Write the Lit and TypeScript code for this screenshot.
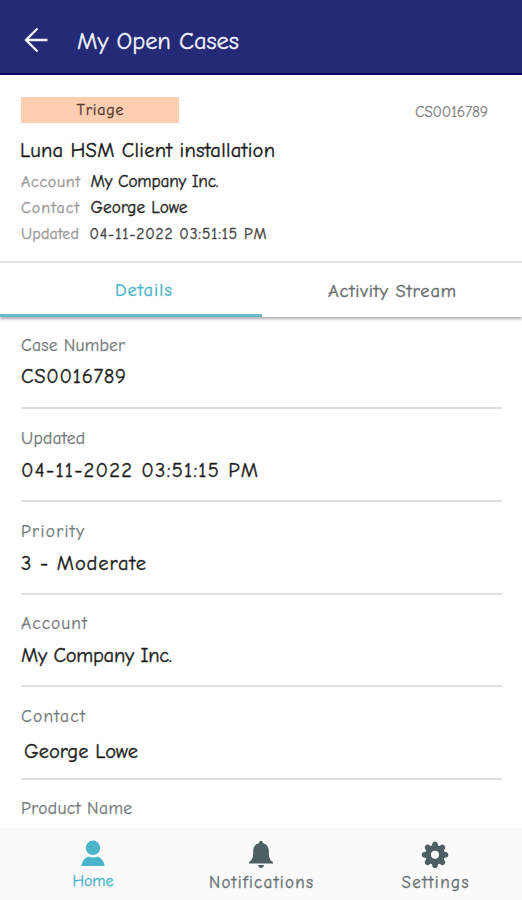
import { LitElement, html, css, svg } from "lit";
import { customElement, property } from "lit/decorators.js";
import { styleMap } from "lit/directives/style-map.js";

/* A single line of text whose tracking is adjusted to fill a given width. */
@customElement("fit-text")
class FitText extends LitElement {
  @property({ type: Number }) width = 0;
  @property() text = "";

  static styles = css`
    :host { display: block; white-space: nowrap; flex: none; }
    .run { display: inline-block; }
  `;

  updated() {
    const run = this.renderRoot.querySelector(".run") as HTMLElement;
    run.style.letterSpacing = "0px";
    const natural = run.getBoundingClientRect().width;
    run.style.letterSpacing = (this.width - natural) / (this.text.length - 1) + "px";
    this.style.width = this.width + "px";
  }

  render() {
    return html`<span class="run">${this.text}</span>`;
  }
}

interface Field {
  label: string;
  labelWidth: number;
  value?: string;
  valueWidth?: number;
  height: number;
  top: number;
  gap: number;
  indent?: number;
}

const FIELDS: Field[] = [
  { label: "Case Number", labelWidth: 104, value: "CS0016789", valueWidth: 105, height: 91, top: 15, gap: 8 },
  { label: "Updated", labelWidth: 64, value: "04-11-2022 03:51:15 PM", valueWidth: 237, height: 93, top: 17, gap: 9 },
  { label: "Priority", labelWidth: 63, value: "3 - Moderate", valueWidth: 125, height: 93, top: 17, gap: 9 },
  { label: "Account", labelWidth: 66, value: "My Company Inc.", valueWidth: 151, height: 92, top: 16, gap: 9 },
  { label: "Contact", labelWidth: 64, value: "George Lowe", valueWidth: 114, height: 93, top: 17, gap: 12, indent: 3 },
  { label: "Product Name", labelWidth: 111, height: 60, top: 16, gap: 0 },
];

const SUMMARY = [
  { label: "Account", labelWidth: 59, value: "My Company Inc.", valueWidth: 128, small: false },
  { label: "Contact", labelWidth: 58, value: "George Lowe", valueWidth: 97, small: false },
  { label: "Updated", labelWidth: 58, value: "04-11-2022 03:51:15 PM", valueWidth: 177, small: true },
];

const person = svg`<circle cx="14" cy="7.8" r="7.2"/><path d="M2.3 26C3 20.5 6.3 17.6 9.3 16.4Q14 18.6 18.7 16.4C21.7 17.6 25 20.5 25.7 26Z"/>`;
const bell = svg`<path d="M14 .8C15.2 .8 15.8 1.7 15.8 3C19.8 4.1 21.8 7.2 21.8 11.5C21.8 17.5 22.8 20 26 22.2V23.6H2V22.2C5.2 20 6.2 17.5 6.2 11.5C6.2 7.2 8.2 4.1 12.2 3C12.2 1.7 12.8 .8 14 .8Z"/><path d="M11 25H17Q16.3 28 14 28T11 25Z"/>`;
const gear = svg`<path fill-rule="evenodd" d="M14 5a9.8 9.8 0 1 0 0 19.6a9.8 9.8 0 1 0 0-19.6ZM14 10.8a4 4 0 1 1 0 8a4 4 0 1 1 0-8Z"/>${[0, 45, 90, 135, 180, 225, 270, 315].map(
  (a) => svg`<path transform=${`rotate(${a} 14 14.8)`} d="M10.6 6.5L11.5 3Q12 1.5 14 1.5T16.5 3L17.4 6.5Z"/>`,
)}`;

@customElement("app-root")
class AppRoot extends LitElement {
  static styles = css`
    :host {
      display: flex;
      flex-direction: column;
      width: 522px;
      height: 900px;
      overflow: hidden;
      background: #fff;
      color: #1c1c1c;
      font-family: "Comic Neue", "Comic Sans MS", "Noto Sans", sans-serif;
      -webkit-text-stroke: 0.35px currentColor;
    }
    .bar {
      box-sizing: border-box;
      flex: none;
      height: 75px;
      display: flex;
      align-items: flex-start;
      padding: 25px 0 0 23px;
      background: #242a75;
      border-bottom: 2px solid #08086a;
      color: #f1f3ff;
    }
    .back { width: 26px; height: 30px; flex: none; }
    .title { margin-left: 28px; font-size: 24.5px; line-height: 32px; }
    .summary { flex: none; box-sizing: border-box; height: 186px; padding: 22px 34px 0 20px; }
    .top { display: flex; justify-content: space-between; }
    .badge {
      margin-left: 1px;
      width: 158px;
      height: 26px;
      display: flex;
      justify-content: center;
      background: #fdceb1;
      color: #54402f;
      font-size: 16px;
      line-height: 27px;
    }
    .number { color: #7c7c7c; font-size: 15.5px; line-height: 31px; -webkit-text-stroke-width: 0.2px; }
    .subject { margin-top: 10px; font-size: 20.5px; line-height: 26px; color: #171717; }
    .line { display: flex; height: 26px; line-height: 26px; padding-left: 1px; }
    .lines { padding-top: 5px; }
    .key { width: 69.5px; flex: none; font-size: 16px; color: #999; }
    .val { font-size: 17.3px; line-height: 24px; color: #222; }
    .val.small { font-size: 15.5px; line-height: 26px; color: #444; margin-left: -1px; }
    .tabs {
      flex: none;
      height: 54px;
      display: flex;
      border-top: 2px solid #e2e4e6;
      box-shadow: 0 2px 3px #aaa;
      background: #fff;
    }
    .tab {
      flex: 1;
      box-sizing: border-box;
      display: flex;
      justify-content: center;
      color: #666c6e;
      font-size: 18.5px;
      line-height: 56px;
    }
    .tab.on {
      flex: none;
      width: 262px;
      height: 54px;
      padding-left: 25px;
      color: #4bb5ca;
      border-bottom: 3px solid #66bccb;
      line-height: 55px;
    }
    .fields { flex: 1; min-height: 0; overflow: hidden; padding: 1px 20px 0 21px; }
    .field { box-sizing: border-box; border-bottom: 2px solid #e0e0e0; line-height: 24px; }
    .label { font-size: 17.5px; color: #72787a; -webkit-text-stroke-width: 0.25px; }
    .value { font-size: 20.5px; color: #1c1c1c; }
    .nav { flex: none; height: 72px; display: flex; background: #fafafa; color: #667072; }
    .item {
      flex: 1;
      display: flex;
      flex-direction: column;
      align-items: center;
      padding-top: 12px;
      font-size: 17px;
      line-height: 21px;
    }
    .item.on { color: #4bb5ca; margin-right: -6px; margin-left: 6px; font-size: 16px; line-height: 18px; }
    .icon { width: 28px; height: 29px; fill: currentColor; margin-bottom: 3px; }
    .icon.dark { fill: #4c6063; }
  `;

  private field(f: Field) {
    return html`<div class="field" style=${styleMap({ height: f.height + "px", paddingTop: f.top + "px" })}>
      <fit-text class="label" .text=${f.label} .width=${f.labelWidth}></fit-text>
      ${f.value
        ? html`<fit-text class="value" style=${styleMap({ marginTop: f.gap + "px", marginLeft: (f.indent ?? 0) + "px" })}
            .text=${f.value} .width=${f.valueWidth!}></fit-text>`
        : null}
    </div>`;
  }

  render() {
    return html`
      <header class="bar">
        <svg class="back" viewBox="0 0 26 30" fill="none" stroke="currentColor" stroke-width="2.4">
          <path d="M24.5 15H3M14.5 3.5L3 15L14.5 26.5" />
        </svg>
        <fit-text class="title" .text=${"My Open Cases"} .width=${162}></fit-text>
      </header>
      <section class="summary">
        <div class="top">
          <div class="badge"><fit-text .text=${"Triage"} .width=${47}></fit-text></div>
          <fit-text class="number" .text=${"CS0016789"} .width=${73}></fit-text>
        </div>
        <fit-text class="subject" .text=${"Luna HSM Client installation"} .width=${255}></fit-text>
        <div class="lines">
          ${SUMMARY.map(
            (s) => html`<div class="line">
              <div class="key"><fit-text .text=${s.label} .width=${s.labelWidth}></fit-text></div>
              <fit-text class="val ${s.small ? "small" : ""}" .text=${s.value} .width=${s.valueWidth}></fit-text>
            </div>`,
          )}
        </div>
      </section>
      <nav class="tabs">
        <div class="tab on"><fit-text .text=${"Details"} .width=${57}></fit-text></div>
        <div class="tab"><fit-text .text=${"Activity Stream"} .width=${128}></fit-text></div>
      </nav>
      <main class="fields">${FIELDS.map((f) => this.field(f))}</main>
      <footer class="nav">
        <div class="item on"><svg class="icon" viewBox="0 0 28 29">${person}</svg><fit-text .text=${"Home"} .width=${41}></fit-text></div>
        <div class="item"><svg class="icon dark" viewBox="0 0 28 29">${bell}</svg><fit-text .text=${"Notifications"} .width=${104}></fit-text></div>
        <div class="item"><svg class="icon dark" viewBox="0 0 28 29">${gear}</svg><fit-text .text=${"Settings"} .width=${67}></fit-text></div>
      </footer>
    `;
  }
}
